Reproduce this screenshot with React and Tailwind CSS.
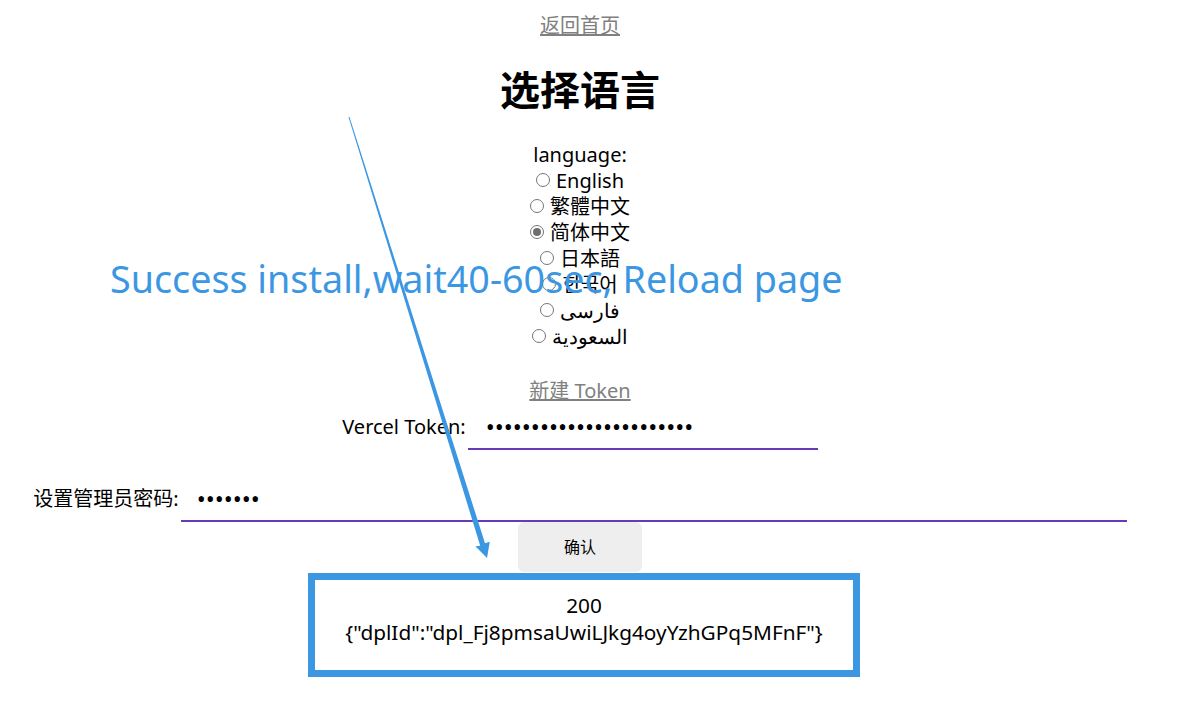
import { useState } from 'react'

const languages = [
  { id: 'en', label: 'English' },
  { id: 'zh-TW', label: '繁體中文' },
  { id: 'zh-CN', label: '简体中文' },
  { id: 'ja', label: '日本語' },
  { id: 'ko', label: '한국어' },
  { id: 'fa', label: 'فارسی' },
  { id: 'ar', label: 'السعودية' },
]

function Radio({ checked }) {
  return (
    <span className="shrink-0 inline-flex items-center justify-center w-[14px] h-[14px] rounded-full border border-[#767676] bg-white mr-[6px] -translate-y-px">
      {checked && <span className="w-[8px] h-[8px] rounded-full bg-[#6e6e6e]"></span>}
    </span>
  )
}

export default function App() {
  const [lang, setLang] = useState('zh-CN')

  return (
    <div className="relative min-h-screen bg-white text-black font-['Noto_Sans','Noto_Sans_CJK_SC',sans-serif]">
      <div className="w-[1160px] flex flex-col items-center">
        {/* 返回首页 */}
        <a href="#" className="mt-[13px] text-[20px] leading-[26px] text-[#808080] underline">
          返回首页
        </a>

        <h1 className="mt-[27px] text-[40px] leading-[48px] font-bold">选择语言</h1>

        {/* 语言选择 */}
        <div className="mt-[28px] flex flex-col items-center text-[20px] leading-[26px]">
          <span>language:</span>
          {languages.map((l) => (
            <label key={l.id} className="flex items-center cursor-pointer" onClick={() => setLang(l.id)}>
              <Radio checked={lang === l.id} />
              <span>{l.label}</span>
            </label>
          ))}
        </div>

        <a href="#" className="mt-[28px] text-[20px] leading-[26px] text-[#808080] underline">
          新建 Token
        </a>

        {/* Vercel Token */}
        <div className="flex items-center text-[20px]">
          <span className="mr-[2px]">Vercel Token:</span>
          <input
            type="password"
            readOnly
            defaultValue="xxxxxxxxxxxxxxxxxxxxxxx"
            className="w-[350px] h-[46px] pl-[18px] text-[24px] outline-none border-b-2 border-[#673ab7] bg-transparent"
          />
        </div>

        {/* 管理员密码 */}
        <div className="mt-[26px] flex items-center text-[20px]">
          <span className="mr-[2px]">设置管理员密码:</span>
          <input
            type="password"
            readOnly
            defaultValue="xxxxxxx"
            className="w-[946px] h-[46px] pl-[16px] text-[24px] outline-none border-b-2 border-[#673ab7] bg-transparent"
          />
        </div>

        <button className="w-[124px] h-[50px] rounded-[6px] bg-[#eeeeee] text-[16px]">确认</button>

        {/* 结果 */}
        <div className="mt-px ml-[8px] w-[552px] h-[104px] border-[7px] border-[#3c97e3] pt-[12px] text-center text-[20.8px] leading-[27px]">
          <div>200</div>
          <div>{'{"dplId":"dpl_Fj8pmsaUwiLJkg4oyYzhGPq5MFnF"}'}</div>
        </div>
      </div>

      {/* 标注 */}
      <div className="absolute left-[110px] top-[255px] text-[37.7px] leading-[48px] text-[#3c97e3] whitespace-nowrap pointer-events-none">
        Success install,wait40-60sec, Reload page
      </div>
      <svg className="absolute left-0 top-0 pointer-events-none" width="1185" height="708">
        <polygon
          points="348.5,117.1 349.5,116.9 485,543.3 489.8,541.8 487,558 475.4,546.2 480.2,545.8"
          fill="#3c97e3"
        />
      </svg>
    </div>
  )
}
